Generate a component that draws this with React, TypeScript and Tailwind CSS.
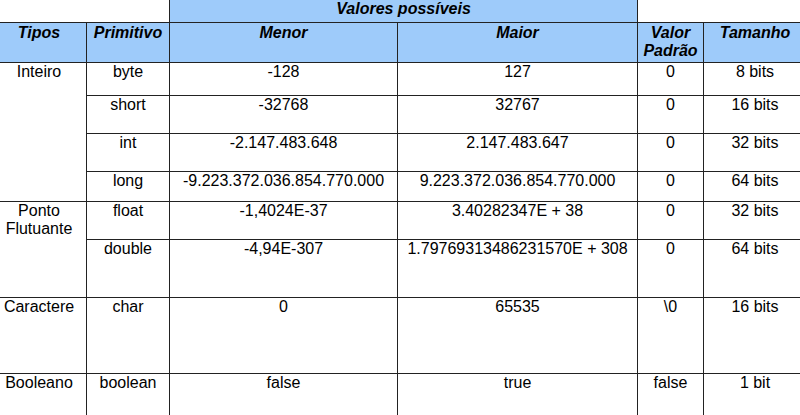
import React from 'react'

const rows = [
  { prim: 'byte', min: '-128', max: '127', def: '0', size: '8 bits', h: 'h-[32px]' },
  { prim: 'short', min: '-32768', max: '32767', def: '0', size: '16 bits', h: 'h-[37px]' },
  { prim: 'int', min: '-2.147.483.648', max: '2.147.483.647', def: '0', size: '32 bits', h: 'h-[37px]' },
  { prim: 'long', min: '-9.223.372.036.854.770.000', max: '9.223.372.036.854.770.000', def: '0', size: '64 bits', h: 'h-[29px]' },
  { prim: 'float', min: '-1,4024E-37', max: '3.40282347E + 38', def: '0', size: '32 bits', h: 'h-[37px]' },
  { prim: 'double', min: '-4,94E-307', max: '1.79769313486231570E + 308', def: '0', size: '64 bits', h: 'h-[57px]' },
  { prim: 'char', min: '0', max: '65535', def: '\\0', size: '16 bits', h: 'h-[75px]' },
  { prim: 'boolean', min: 'false', max: 'true', def: 'false', size: '1 bit', h: 'h-[60px]' },
]

const types: Record<number, { label: React.ReactNode; span: string }> = {
  0: { label: 'Inteiro', span: 'row-span-4' },
  4: { label: 'Ponto Flutuante', span: 'row-span-2' },
  6: { label: 'Caractere', span: 'row-span-1' },
  7: { label: 'Booleano', span: 'row-span-1' },
}

const cell = 'bg-white text-center leading-[18px]'
const head = 'bg-[#9ecbfa] text-center leading-[18px] font-bold italic pt-[1px]'

export default function App() {
  return (
    <div className="w-screen h-screen overflow-hidden bg-white">
      <div
        className="ml-[-8px] grid gap-px bg-[#222] text-[16px] text-black w-max"
        style={{ fontFamily: '"Liberation Sans", Arial, sans-serif' }}
      >
        <div className="grid grid-cols-[94px_82px_227px_239px_65px_102px] gap-px">
          {/* top header row */}
          <div className="col-span-2 h-[22px] bg-white" />
          <div className="col-span-2 h-[22px] bg-[#9ecbfa] text-center leading-[18px] font-bold italic">
            Valores possíveis
          </div>
          <div className="col-span-2 h-[22px] bg-white" />

          {/* column headers */}
          <div className={`${head} h-[39px]`}>Tipos</div>
          <div className={head}>Primitivo</div>
          <div className={head}>Menor</div>
          <div className={head}>Maior</div>
          <div className={head}>
            Valor
            <br />
            Padrão
          </div>
          <div className={head}>Tamanho</div>

          {rows.map((r, i) => (
            <React.Fragment key={r.prim}>
              {types[i] && (
                <div className={`${cell} ${types[i].span} px-1`}>{types[i].label}</div>
              )}
              <div className={`${cell} ${r.h}`}>{r.prim}</div>
              <div className={cell}>{r.min}</div>
              <div className={cell}>{r.max}</div>
              <div className={cell}>{r.def}</div>
              <div className={cell}>{r.size}</div>
            </React.Fragment>
          ))}
        </div>
      </div>
    </div>
  )
}
